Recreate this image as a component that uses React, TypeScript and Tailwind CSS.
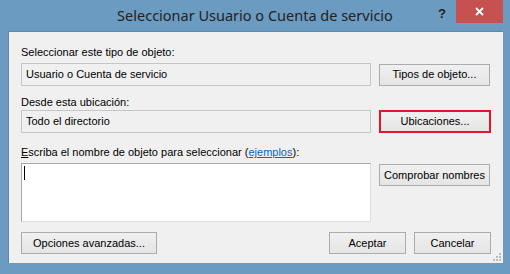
const ui = { fontFamily: '"Liberation Sans", Arial, sans-serif' };

function Button({ label, className = '' }: { label: string; className?: string }) {
  return (
    <div
      className={`flex items-center justify-center border border-[#acacac] bg-gradient-to-b from-[#f0f0f0] to-[#e5e5e5] text-[11px] text-black ${className}`}
    >
      {label}
    </div>
  );
}

function Grip() {
  const dots = [
    [6, 0],
    [6, 3],
    [3, 3],
    [6, 6],
    [3, 6],
    [0, 6],
  ];
  return (
    <svg width="8" height="8" className="absolute right-[2px] bottom-[2px]">
      {dots.map(([x, y], i) => (
        <rect key={i} x={x} y={y} width="2" height="2" fill="#bcbcbc" />
      ))}
    </svg>
  );
}

export default function App() {
  return (
    <div className="flex h-[274px] w-[510px] flex-col bg-[#6c9bc1]" style={ui}>
      {/* title bar */}
      <div className="relative flex h-[31px] shrink-0 items-center justify-center">
        <span
          className="mt-[1px] text-[14.5px] text-[#222]"
          style={{ fontFamily: '"Noto Sans", "Open Sans", sans-serif' }}
        >
          Seleccionar Usuario o Cuenta de servicio
        </span>
        <span className="absolute left-[438px] top-[4px] text-[13px] font-bold text-[#222]">?</span>
        <div className="absolute right-[7px] top-0 flex h-[23px] w-[47px] items-center justify-center bg-[#c75050]">
          <svg width="9" height="9" viewBox="0 0 9 9">
            <path d="M1 1 L8 8 M8 1 L1 8" stroke="white" strokeWidth="1.8" />
          </svg>
        </div>
      </div>

      {/* client area */}
      <div className="relative mb-[11px] ml-[8px] mr-[7px] flex flex-1 flex-col border-t border-l border-[#5c88ab] bg-[#f0f0f0] px-[12px] pt-[14px] text-[11px] text-black">
        <div className="h-[13px] leading-[13px]">Seleccionar este tipo de objeto:</div>
        <div className="mt-[4px] flex items-center gap-[8px]">
          <div className="flex h-[23px] w-[350px] items-center border border-[#c6c6c6] bg-[#f0f0f0] pl-[4px]">
            Usuario o Cuenta de servicio
          </div>
          <Button label="Tipos de objeto..." className="h-[22px] w-[111px]" />
        </div>

        <div className="mt-[10px] h-[13px] leading-[13px]">Desde esta ubicación:</div>
        <div className="mt-[1px] flex items-center gap-[8px]">
          <div className="flex h-[23px] w-[350px] items-center border border-[#c6c6c6] bg-[#f0f0f0] pl-[4px]">
            Todo el directorio
          </div>
          <div className="h-[23px] w-[112px] border-2 border-[#e3142c]">
            <div className="flex h-full w-full items-center justify-center bg-gradient-to-b from-[#f0f0f0] to-[#e5e5e5]">
              Ubicaciones...
            </div>
          </div>
        </div>

        <div className="mt-[13px] h-[13px] leading-[13px]">
          <span className="underline">E</span>scriba el nombre de objeto para seleccionar (<span className="text-[#0066cc] underline">ejemplos</span>):
        </div>
        <div className="mt-[4px] flex items-start gap-[8px]">
          <div className="relative h-[59px] w-[350px] border border-[#a8a8a8] border-r-[#dedede] border-b-[#dedede] bg-white">
            <div className="absolute left-[2px] top-[2px] h-[14px] w-[1px] bg-black" />
          </div>
          <Button label="Comprobar nombres" className="mt-[1px] h-[22px] w-[111px]" />
        </div>

        <div className="mt-[10px] flex items-center">
          <Button label="Opciones avanzadas..." className="h-[22px] w-[136px]" />
          <div className="flex-1" />
          <Button label="Aceptar" className="h-[22px] w-[77px]" />
          <Button label="Cancelar" className="ml-[8px] h-[22px] w-[77px]" />
        </div>
        <Grip />
      </div>
    </div>
  );
}
